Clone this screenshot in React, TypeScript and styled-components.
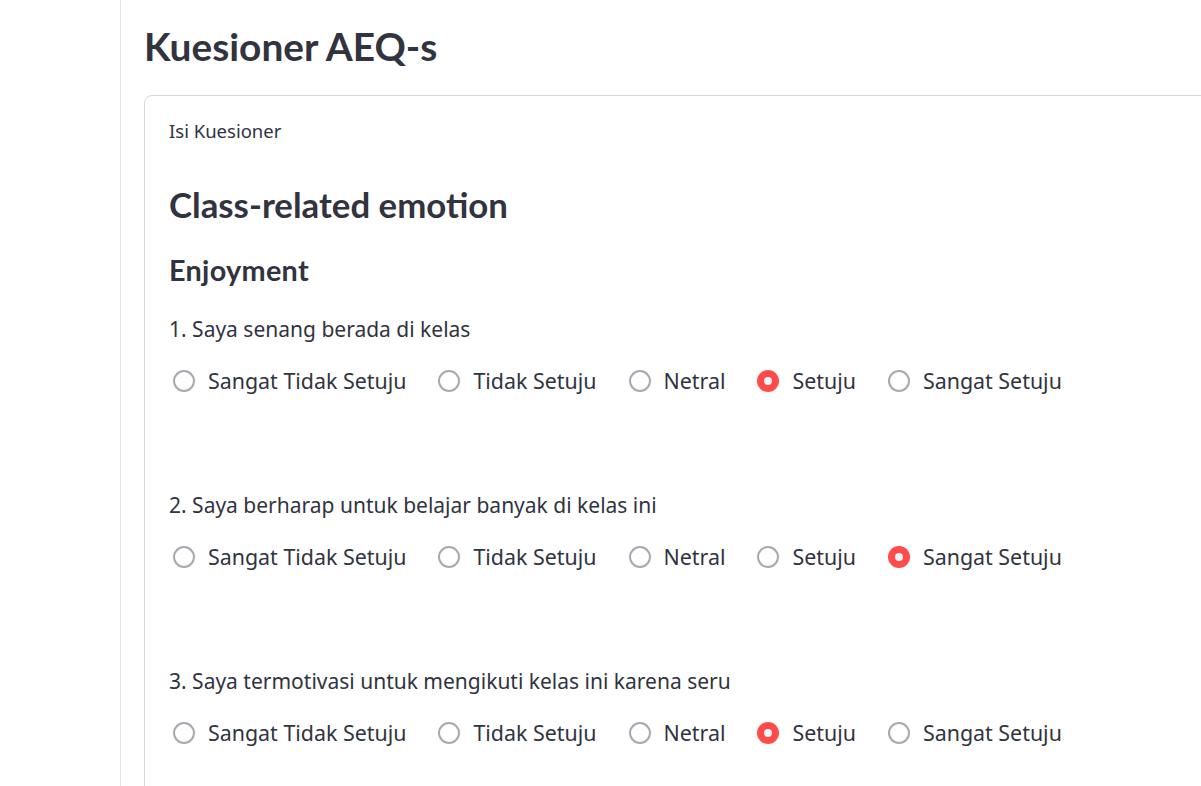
import React from "react";
import styled, { createGlobalStyle } from "styled-components";

const Global = createGlobalStyle`
  html, body { margin: 0; padding: 0; background: #ffffff; }
  body { overflow: hidden; font-family: "Noto Sans", "Source Sans Pro", Lato, sans-serif; color: #31333f; }
  #root { width: 1201px; height: 786px; overflow: hidden; }
`;

const Page = styled.div`
  display: flex;
  height: 786px;
`;

const Rail = styled.div`
  flex: 0 0 120px;
  border-right: 1px solid #e3e3e6;
`;

const Main = styled.main`
  flex: 0 0 1200px;
  padding-left: 23px;
  display: flex;
  flex-direction: column;
`;

const Title = styled.h1`
  margin: 22px 0 0 0;
  font-family: Lato, "Noto Sans", sans-serif;
  font-size: 38.8px;
  line-height: 48px;
  font-weight: 700;
  color: #31333f;
`;

const Form = styled.section`
  margin-top: 25px;
  border: 1px solid #d6d6d9;
  border-radius: 8px;
  padding: 23px 24px 80px 24px;
  display: flex;
  flex-direction: column;
  width: 1150px;
`;

const FormLabel = styled.div`
  font-size: 18.5px;
  line-height: 24px;
`;

const SectionTitle = styled.h2`
  margin: 40px 0 0 0;
  font-family: Lato, "Noto Sans", sans-serif;
  font-size: 34.8px;
  line-height: 44px;
  font-weight: 700;
`;

const SubTitle = styled.h3`
  margin: 25px 0 0 0;
  font-family: Lato, "Noto Sans", sans-serif;
  font-size: 28.8px;
  line-height: 36px;
  font-weight: 700;
  letter-spacing: 0.3px;
`;

const Question = styled.div<{ $first?: boolean }>`
  margin-top: ${(p) => (p.$first ? "27px" : "96px")};
  display: flex;
  flex-direction: column;
  gap: 24px;
`;

const QuestionText = styled.div`
  font-size: 21px;
  line-height: 28px;
`;

const Options = styled.div`
  display: flex;
  align-items: center;
  gap: 32px;
  padding-left: 4px;
`;

const Option = styled.label`
  display: flex;
  align-items: center;
  gap: 13px;
  font-size: 21.4px;
  line-height: 28px;
  cursor: pointer;
`;

const Circle = styled.span<{ $checked: boolean }>`
  box-sizing: border-box;
  flex: 0 0 22px;
  width: 22px;
  height: 22px;
  border-radius: 50%;
  display: flex;
  align-items: center;
  justify-content: center;
  border: ${(p) => (p.$checked ? "none" : "2.5px solid #a8a9b0")};
  background: ${(p) => (p.$checked ? "#ff4b4b" : "#ffffff")};
`;

const Dot = styled.span`
  width: 8px;
  height: 8px;
  border-radius: 50%;
  background: #f3f4f7;
`;

const choices = ["Sangat Tidak Setuju", "Tidak Setuju", "Netral", "Setuju", "Sangat Setuju"];

const questions = [
  { text: "1. Saya senang berada di kelas", answer: 3 },
  { text: "2. Saya berharap untuk belajar banyak di kelas ini", answer: 4 },
  { text: "3. Saya termotivasi untuk mengikuti kelas ini karena seru", answer: 3 },
];

export default function App() {
  return (
    <>
      <Global />
      <Page>
        <Rail />
        <Main>
          <Title>Kuesioner AEQ-s</Title>
          <Form>
            <FormLabel>Isi Kuesioner</FormLabel>
            <SectionTitle>Class-related emotion</SectionTitle>
            <SubTitle>Enjoyment</SubTitle>
            {questions.map((q, qi) => (
              <Question key={qi} $first={qi === 0}>
                <QuestionText>{q.text}</QuestionText>
                <Options>
                  {choices.map((c, ci) => (
                    <Option key={c}>
                      <Circle $checked={ci === q.answer}>{ci === q.answer && <Dot />}</Circle>
                      {c}
                    </Option>
                  ))}
                </Options>
              </Question>
            ))}
          </Form>
        </Main>
      </Page>
    </>
  );
}
